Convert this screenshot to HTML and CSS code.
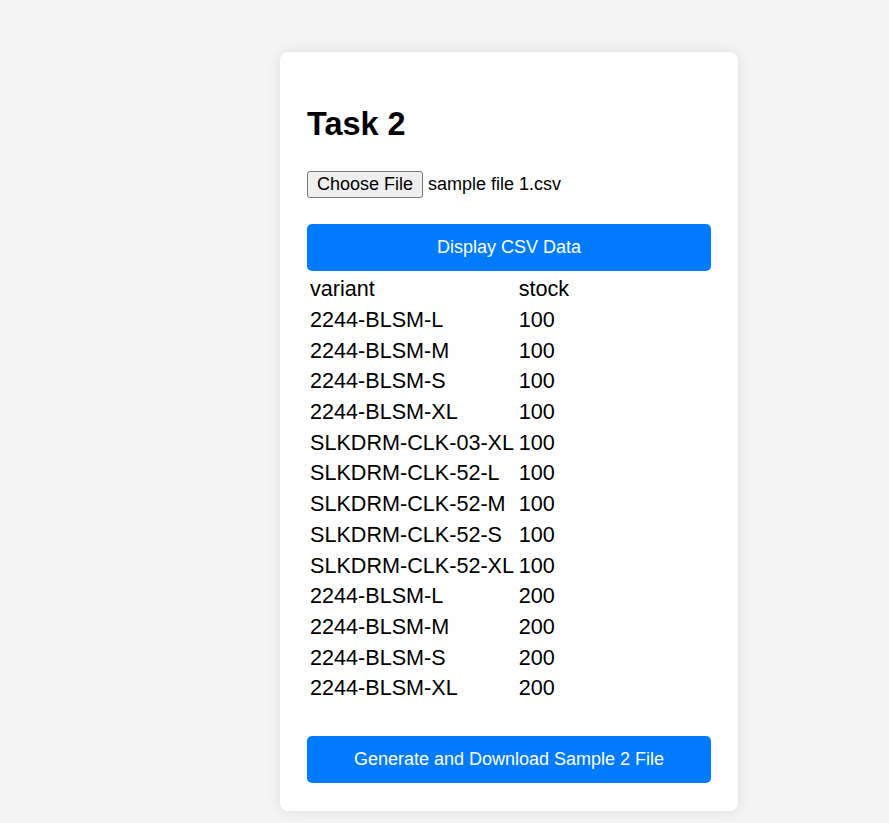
FILE: index.html
```html
<!DOCTYPE html>
<html lang="en">
<head>
<meta charset="utf-8">
<title>Task 2</title>
<link rel="stylesheet" href="styles.css">
</head>
<body>
<div class="card">
  <h2 class="title">Task 2</h2>
  <div class="file-row">
    <span class="file-btn">Choose File</span>
    <span class="file-name">sample file 1.csv</span>
  </div>
  <button class="action">Display CSV Data</button>
  <table class="data">
    <tbody>
      <tr><td>variant</td><td>stock</td></tr>
      <tr><td>2244-BLSM-L</td><td>100</td></tr>
      <tr><td>2244-BLSM-M</td><td>100</td></tr>
      <tr><td>2244-BLSM-S</td><td>100</td></tr>
      <tr><td>2244-BLSM-XL</td><td>100</td></tr>
      <tr><td>SLKDRM-CLK-03-XL</td><td>100</td></tr>
      <tr><td>SLKDRM-CLK-52-L</td><td>100</td></tr>
      <tr><td>SLKDRM-CLK-52-M</td><td>100</td></tr>
      <tr><td>SLKDRM-CLK-52-S</td><td>100</td></tr>
      <tr><td>SLKDRM-CLK-52-XL</td><td>100</td></tr>
      <tr><td>2244-BLSM-L</td><td>200</td></tr>
      <tr><td>2244-BLSM-M</td><td>200</td></tr>
      <tr><td>2244-BLSM-S</td><td>200</td></tr>
      <tr><td>2244-BLSM-XL</td><td>200</td></tr>
    </tbody>
  </table>
  <button class="action action-bottom">Generate and Download Sample 2 File</button>
</div>
</body>
</html>
```

FILE: styles.css
```css
html, body {
  margin: 0;
  padding: 0;
  background: #f4f4f4;
  font-family: "Liberation Sans", Arial, sans-serif;
  color: #000;
}

body {
  padding: 52px 0 12px 280px;
}

.card {
  width: 458px;
  box-sizing: border-box;
  background: #fff;
  border-radius: 8px;
  padding: 27px 27px 28px;
  box-shadow: 0 0 13px rgba(0, 0, 0, 0.1);
}

.title {
  font-size: 32.4px;
  font-weight: bold;
  margin: 27px 0 28px;
  line-height: 37px;
}

.file-row {
  display: flex;
  align-items: center;
  gap: 5px;
  height: 27px;
  font-size: 18px;
}

.file-btn {
  display: inline-flex;
  align-items: center;
  height: 27px;
  box-sizing: border-box;
  padding: 0 9px;
  background: #efefef;
  border: 1px solid #767676;
  border-radius: 3px;
  color: #000;
}

.file-name {
  color: #000;
}

.action {
  display: block;
  width: 100%;
  margin-top: 26px;
  height: 47px;
  padding: 0 13px;
  border: none;
  border-radius: 5px;
  background: #007bff;
  color: #fff;
  font-family: "Liberation Sans", Arial, sans-serif;
  font-size: 18px;
}

.action-bottom {
  margin-top: 31px;
}

.data {
  border-collapse: separate;
  border-spacing: 3px;
  margin-left: -1.35px;
  margin-top: 1px;
  font-size: 21.6px;
}

.data td {
  padding: 1.35px;
  line-height: 25px;
  text-align: left;
}

.data td + td {
  padding-left: 0.4px;
}
```
